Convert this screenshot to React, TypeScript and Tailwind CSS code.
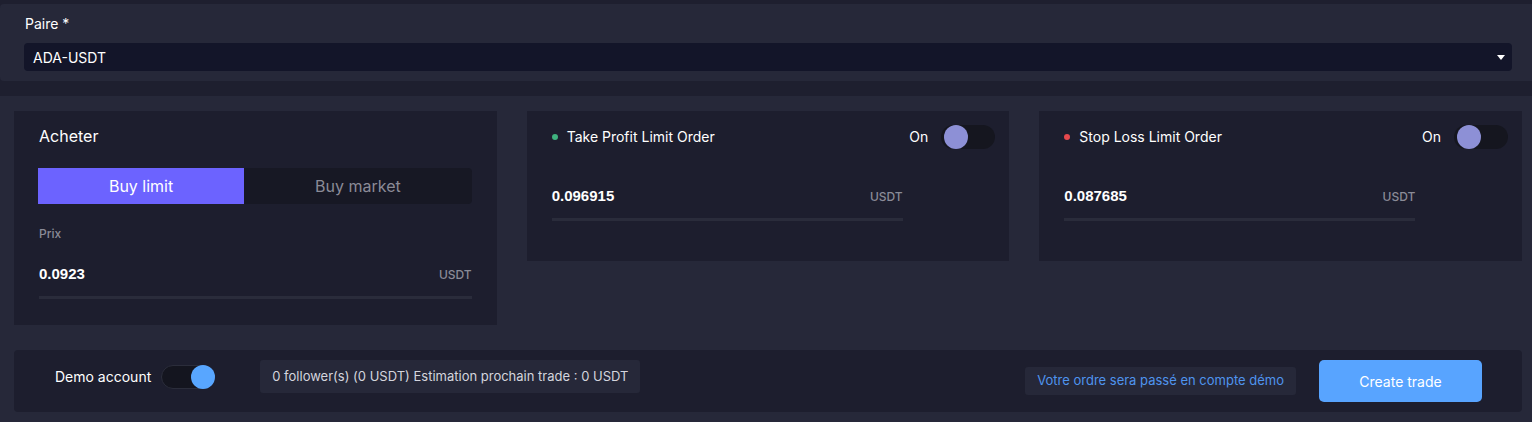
import React from "react";

function Toggle({ knob, on }: { knob: string; on: boolean }) {
  return (
    <div className="relative w-[54px] h-[24px] rounded-full bg-[#15161f] shrink-0">
      <div
        className={
          "absolute top-0 w-[24px] h-[24px] rounded-full " +
          knob +
          (on ? " right-0" : " left-[3px]")
        }
      />
    </div>
  );
}

const numFont = { fontFamily: "'Liberation Sans', Arial, sans-serif" };

function OrderCard({ dot, title, value }: { dot: string; title: string; value: string }) {
  return (
    <div className="bg-[#1d1e2e] h-[150px] pt-[14px] pl-[25px] pr-[14px]">
      <div className="flex items-center justify-between h-[24px]">
        <div className="flex items-center">
          <div className={"w-[6px] h-[6px] rounded-full " + dot} />
          <span className="ml-[9px] text-[14px] text-white leading-[20px]">{title}</span>
        </div>
        <div className="flex items-center">
          <span className="text-[14px] text-white leading-[20px]">On</span>
          <div className="ml-[13px]">
            <Toggle knob="bg-[#8d90d6]" on={false} />
          </div>
        </div>
      </div>
      <div className="w-[351px] mt-[37px]">
        <div className="flex items-baseline justify-between">
          <span className="text-[15px] font-bold text-white leading-[20px]" style={numFont}>
            {value}
          </span>
          <span className="text-[12px] text-[#8a8b97] leading-[16px] font-medium">USDT</span>
        </div>
        <div className="mt-[12px] h-[3px] bg-[#2a2c3b]" />
      </div>
    </div>
  );
}

export default function App() {
  return (
    <div
      className="w-[1532px] h-[422px] bg-[#1e1f2f] pt-[4px] flex flex-col overflow-hidden"
      style={{ fontFamily: "Inter, 'Noto Sans', sans-serif" }}
    >
      {/* Pair panel */}
      <div className="bg-[#262839] h-[77px] pt-[10px] pl-[24px] pr-[20px] rounded-l-[4px]">
        <div className="pl-[1px] text-[14px] text-white leading-[20px]">Paire *</div>
        <div className="mt-[9px] h-[28px] bg-[#131529] rounded-[4px] flex items-center justify-between pl-[9px] pr-[7px]">
          <span className="text-[14px] text-white">ADA-USDT</span>
          <svg width="8" height="5" viewBox="0 0 8 5">
            <path d="M0 0 L8 0 L4 5 Z" fill="#ffffff" />
          </svg>
        </div>
      </div>

      {/* Main */}
      <div className="mt-[15px] flex-1 bg-[#262839] pt-[15px] pl-[14px] pr-[10px]">
        <div className="grid grid-cols-3 gap-[30px] items-start">
          {/* Acheter */}
          <div className="bg-[#1d1e2e] h-[214px] pt-[15px] pl-[24px] pr-[25px]">
            <div className="pl-[1px] text-[16px] text-white leading-[21px]">Acheter</div>
            <div className="mt-[21px] flex h-[36px]">
              <div className="flex-auto bg-[#6c63ff] flex items-center justify-center text-[16px] text-white">
                Buy limit
              </div>
              <div className="flex-auto bg-[#171824] rounded-r-[4px] flex items-center justify-center text-[16px] text-[#8b8b97]">
                Buy market
              </div>
            </div>
            <div className="pl-[1px]">
              <div className="mt-[22px] text-[12px] leading-[16px] text-[#8a8b97] font-medium">Prix</div>
              <div className="mt-[22px] flex items-baseline justify-between">
                <span className="text-[15px] font-bold text-white leading-[20px]" style={numFont}>
                  0.0923
                </span>
                <span className="text-[12px] text-[#8a8b97] leading-[16px] font-medium">USDT</span>
              </div>
              <div className="mt-[12px] h-[3px] bg-[#2a2c3b]" />
            </div>
          </div>

          <OrderCard dot="bg-[#3fb27f]" title="Take Profit Limit Order" value="0.096915" />
          <OrderCard dot="bg-[#e5484d]" title="Stop Loss Limit Order" value="0.087685" />
        </div>

        {/* Bottom bar */}
        <div className="mt-[25px] h-[62px] bg-[#1d1e2e] rounded-[4px] flex items-center justify-between pl-[41px] pr-[40px]">
          <div className="flex items-center self-start mt-[10px]">
            <span className="text-[14px] text-white">Demo account</span>
            <div className="ml-[10px] relative w-[54px] h-[24px] rounded-full bg-[#14151f] border border-[#2b2d3b]">
              <div className="absolute top-[-1px] right-[-1px] w-[24px] h-[24px] rounded-full bg-[#58a6ff]" />
            </div>
            <div className="ml-[45px] h-[33px] bg-[#262839] rounded-[3px] px-[12px] flex items-center text-[13px] text-[#d4d5dd]">
              0 follower(s) (0 USDT) Estimation prochain trade : 0 USDT
            </div>
          </div>
          <div className="flex items-center">
            <div className="h-[28px] bg-[#262839] rounded-[3px] px-[12px] flex items-center text-[13px] text-[#4f94ee]">
              Votre ordre sera passé en compte démo
            </div>
            <button className="ml-[23px] w-[163px] h-[42px] bg-[#58a4ff] rounded-[5px] text-[14px] text-white">
              Create trade
            </button>
          </div>
        </div>
      </div>
    </div>
  );
}
